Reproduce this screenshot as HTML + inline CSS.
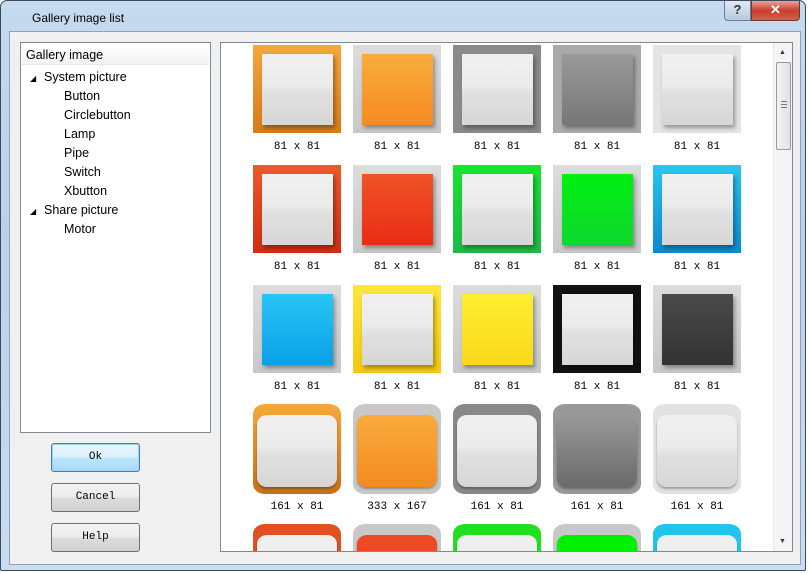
<!DOCTYPE html><html><head><style>
*{margin:0;padding:0;box-sizing:border-box}
html,body{width:808px;height:573px;overflow:hidden}
body{background:#fff;font-family:"Liberation Sans",sans-serif;position:relative}
.win{position:absolute;left:0;top:0;width:806px;height:571px;border:1px solid #3a4a5a;border-radius:7px 7px 2px 2px;background:linear-gradient(180deg,#c5daee 0%,#b9d1ea 40%,#c9dcf0 100%)}
.title{position:absolute;left:31px;top:10px;font-size:12px;color:#000}
.client{position:absolute;left:8px;top:30px;width:792px;height:534px;background:#f0f0f0;border:1px solid #8ea3b9}
.hb{position:absolute;top:0;left:723px;width:27px;height:20px;border:1px solid #6b7d91;border-top:none;border-radius:0 0 0 4px;background:linear-gradient(#dfe9f5,#b7c9df);font-size:13px;font-weight:bold;color:#333;text-align:center;line-height:18px}
.cb{position:absolute;top:0;left:750px;width:49px;height:20px;border:1px solid #6b3a30;border-top:none;border-radius:0 0 4px 0;background:linear-gradient(#e8a497,#c7402c 50%,#d4604a);color:#fff;font-size:13px;font-weight:bold;text-align:center;line-height:18px}
.tree{position:absolute;left:20px;top:42px;width:191px;height:391px;background:#fff;border:1px solid #828790}
.tree div{position:absolute;font-size:12.5px;color:#000;white-space:nowrap}
.hdr{left:1px;top:1px;width:187px;height:21px;background:linear-gradient(#fff,#f2f2f2);border-bottom:1px solid #e5e5e5;padding-left:4px;line-height:22px}
.tri{font-size:8px!important;color:#444}
.btn{position:absolute;left:51px;width:89px;height:29px;border:1px solid #707070;border-radius:3px;background:linear-gradient(#f2f2f2 0%,#ebebeb 50%,#dddddd 51%,#cfcfcf 100%);font-family:"Liberation Mono",monospace;font-size:11px;text-align:center;line-height:26px}
.ok{border-color:#3c7fb1;background:linear-gradient(#eaf6fd 0%,#d9f0fc 50%,#bee6fd 51%,#a7d9f5 100%);box-shadow:inset 0 0 0 1px #9ed4f0}
.pane{position:absolute;left:220px;top:42px;width:573px;height:510px;background:#fff;border:1px solid #828790;overflow:hidden}
.t{position:absolute;width:88px;height:88px}
.i{position:absolute;left:9px;top:9px;width:71px;height:71px;box-shadow:2px 3px 4px rgba(0,0,0,.35)}
.r .t{height:90px;border-radius:12px/10px}
.r .i{left:4px;top:11px;width:80px;height:72px;border-radius:10px/9px;box-shadow:0 2px 2px rgba(0,0,0,.3)}
.l{position:absolute;width:88px;text-align:center;font-family:"Liberation Mono",monospace;font-size:11px;color:#000}
.W{background:linear-gradient(#f0f0f0,#ebebeb 45%,#e0e0e0 55%,#d6d6d6)}
.G{background:linear-gradient(#dcdcdc,#c8c8c8)}
.sb{position:absolute;left:552px;top:0;width:19px;height:508px;background:#f4f4f4;border-left:1px solid #e6e6e6}
.th{position:absolute;left:2px;top:19px;width:15px;height:88px;border:1px solid #9a9a9a;border-radius:2px;background:linear-gradient(90deg,#f3f3f3,#e2e2e2)}
</style></head><body>
<div class="win">
<div class="title">Gallery image list</div>
<div class="hb">?</div><div class="cb">✕</div>
<div class="client"></div>
</div>
<div class="tree">
<div class="hdr">Gallery image</div>
<div class="tri" style="left:9px;top:31px">◢</div>
<div style="left:23px;top:27px">System picture</div>
<div style="left:43px;top:46px">Button</div>
<div style="left:43px;top:65px">Circlebutton</div>
<div style="left:43px;top:84px">Lamp</div>
<div style="left:43px;top:103px">Pipe</div>
<div style="left:43px;top:122px">Switch</div>
<div style="left:43px;top:141px">Xbutton</div>
<div class="tri" style="left:9px;top:164px">◢</div>
<div style="left:23px;top:160px">Share picture</div>
<div style="left:43px;top:179px">Motor</div>
</div>
<div class="btn ok" style="top:443px">Ok</div>
<div class="btn" style="top:483px">Cancel</div>
<div class="btn" style="top:523px">Help</div>
<div class="pane">
<div class="t" style="left:32px;top:2px;background:linear-gradient(#f5a83a,#d97a18)"><div class="i W"></div></div>
<div class="t G" style="left:132px;top:2px"><div class="i" style="background:linear-gradient(#f9ad3c,#f58a23)"></div></div>
<div class="t" style="left:232px;top:2px;background:#8a8a8a"><div class="i W"></div></div>
<div class="t G" style="left:332px;top:2px;background:#aaa"><div class="i" style="background:linear-gradient(#999,#777)"></div></div>
<div class="t" style="left:432px;top:2px;background:#e4e4e4"><div class="i W"></div></div>
<div class="l" style="left:32px;top:98px">81 x 81</div><div class="l" style="left:132px;top:98px">81 x 81</div><div class="l" style="left:232px;top:98px">81 x 81</div><div class="l" style="left:332px;top:98px">81 x 81</div><div class="l" style="left:432px;top:98px">81 x 81</div>
<div class="t" style="left:32px;top:122px;background:linear-gradient(#ec5a2a,#d12d14)"><div class="i W"></div></div>
<div class="t G" style="left:132px;top:122px"><div class="i" style="background:linear-gradient(#ef5328,#ea2c14)"></div></div>
<div class="t" style="left:232px;top:122px;background:linear-gradient(#18e52e,#1fb84a)"><div class="i W"></div></div>
<div class="t G" style="left:332px;top:122px"><div class="i" style="background:linear-gradient(#00f010,#10d830)"></div></div>
<div class="t" style="left:432px;top:122px;background:linear-gradient(#2ac6f0,#0a8ad0)"><div class="i W"></div></div>
<div class="l" style="left:32px;top:218px">81 x 81</div><div class="l" style="left:132px;top:218px">81 x 81</div><div class="l" style="left:232px;top:218px">81 x 81</div><div class="l" style="left:332px;top:218px">81 x 81</div><div class="l" style="left:432px;top:218px">81 x 81</div>
<div class="t G" style="left:32px;top:242px"><div class="i" style="background:linear-gradient(#27c6f5,#0aa0e6)"></div></div>
<div class="t" style="left:132px;top:242px;background:linear-gradient(#ffe73a,#f2c810)"><div class="i W"></div></div>
<div class="t G" style="left:232px;top:242px"><div class="i" style="background:linear-gradient(#ffee30,#f8d81a)"></div></div>
<div class="t" style="left:332px;top:242px;background:#111"><div class="i W"></div></div>
<div class="t G" style="left:432px;top:242px"><div class="i" style="background:linear-gradient(#4a4a4a,#333)"></div></div>
<div class="l" style="left:32px;top:338px">81 x 81</div><div class="l" style="left:132px;top:338px">81 x 81</div><div class="l" style="left:232px;top:338px">81 x 81</div><div class="l" style="left:332px;top:338px">81 x 81</div><div class="l" style="left:432px;top:338px">81 x 81</div>
<div class="r">
<div class="t" style="left:32px;top:361px;background:linear-gradient(#f5a83a,#c8701a)"><div class="i W"></div></div>
<div class="t" style="left:132px;top:361px;background:#c8c8c8"><div class="i" style="background:linear-gradient(#f8ac3c,#f48a22)"></div></div>
<div class="t" style="left:232px;top:361px;background:#888"><div class="i W"></div></div>
<div class="t" style="left:332px;top:361px;background:#999"><div class="i" style="background:linear-gradient(#999,#6a6a6a)"></div></div>
<div class="t" style="left:432px;top:361px;background:#e2e2e2"><div class="i W"></div></div>
<div class="t" style="left:32px;top:481px;background:#e05020"><div class="i W"></div></div>
<div class="t" style="left:132px;top:481px;background:#c8c8c8"><div class="i" style="background:#ee4a22"></div></div>
<div class="t" style="left:232px;top:481px;background:#20e020"><div class="i W"></div></div>
<div class="t" style="left:332px;top:481px;background:#c8c8c8"><div class="i" style="background:#00f000"></div></div>
<div class="t" style="left:432px;top:481px;background:#22c4ee"><div class="i W"></div></div>
</div>
<div class="l" style="left:32px;top:458px">161 x 81</div><div class="l" style="left:132px;top:458px">333 x 167</div><div class="l" style="left:232px;top:458px">161 x 81</div><div class="l" style="left:332px;top:458px">161 x 81</div><div class="l" style="left:432px;top:458px">161 x 81</div>
<div class="sb"><div style="position:absolute;left:5px;top:6px;font-size:7px;color:#333">▲</div><div class="th"><div style="position:absolute;left:4px;top:38px;width:6px;height:7px;border-top:1px solid #777;border-bottom:1px solid #777"><div style="margin-top:2px;border-top:1px solid #777"></div></div></div><div style="position:absolute;left:5px;top:495px;font-size:7px;color:#333">▼</div></div>
</div>
</body></html>
